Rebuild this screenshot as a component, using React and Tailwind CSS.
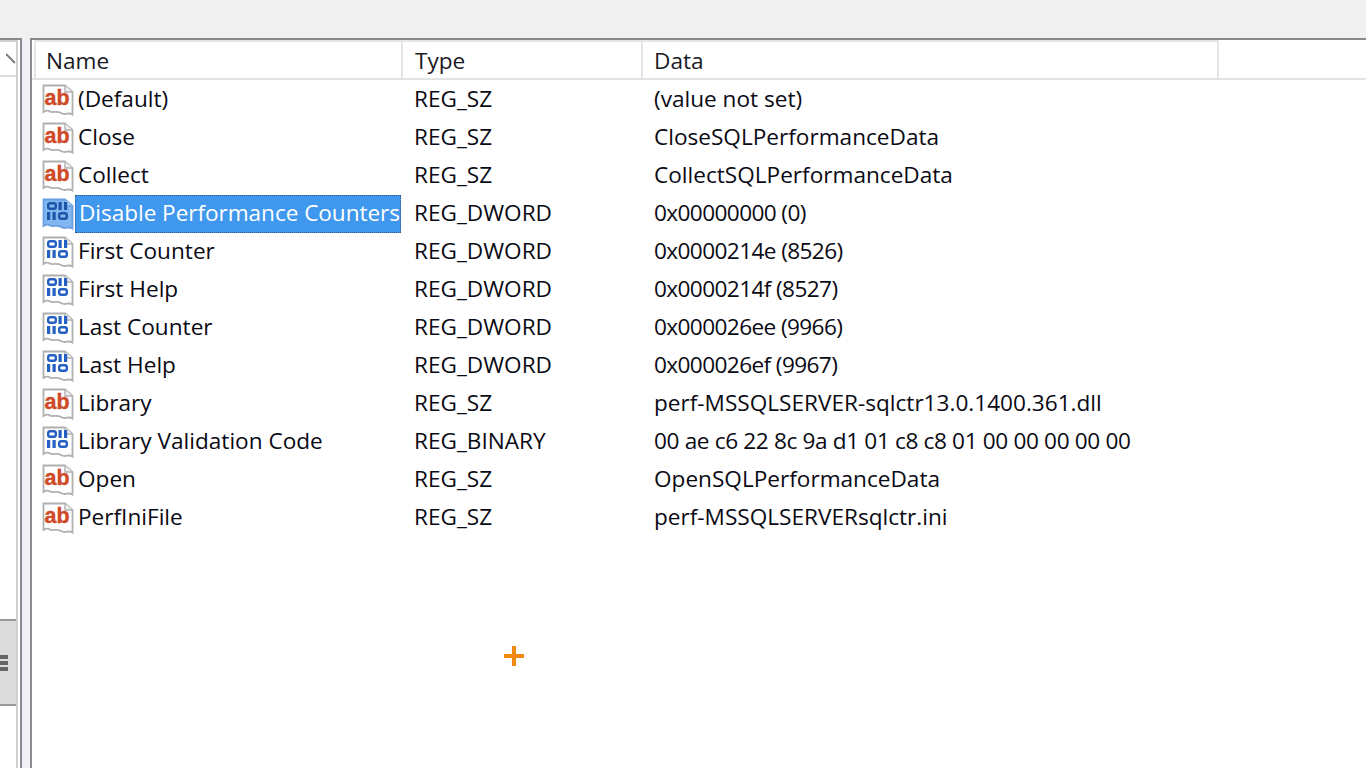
const rows = [
  { name: "(Default)", type: "REG_SZ", data: "(value not set)", icon: "ab" },
  { name: "Close", type: "REG_SZ", data: "CloseSQLPerformanceData", icon: "ab" },
  { name: "Collect", type: "REG_SZ", data: "CollectSQLPerformanceData", icon: "ab" },
  { name: "Disable Performance Counters", type: "REG_DWORD", data: "0x00000000 (0)", icon: "bin", selected: true, tight: "tracking-[-0.6px]" },
  { name: "First Counter", type: "REG_DWORD", data: "0x0000214e (8526)", icon: "bin", tight: "tracking-[-0.6px]" },
  { name: "First Help", type: "REG_DWORD", data: "0x0000214f (8527)", icon: "bin", tight: "tracking-[-0.6px]" },
  { name: "Last Counter", type: "REG_DWORD", data: "0x000026ee (9966)", icon: "bin", tight: "tracking-[-0.6px]" },
  { name: "Last Help", type: "REG_DWORD", data: "0x000026ef (9967)", icon: "bin", tight: "tracking-[-0.6px]" },
  { name: "Library", type: "REG_SZ", data: "perf-MSSQLSERVER-sqlctr13.0.1400.361.dll", icon: "ab" },
  { name: "Library Validation Code", type: "REG_BINARY", data: "00 ae c6 22 8c 9a d1 01 c8 c8 01 00 00 00 00 00", icon: "bin", tight: "tracking-[-0.35px]" },
  { name: "Open", type: "REG_SZ", data: "OpenSQLPerformanceData", icon: "ab" },
  { name: "PerfIniFile", type: "REG_SZ", data: "perf-MSSQLSERVERsqlctr.ini", icon: "ab" },
];

const Page = ({ children, selected }) => (
  <svg width="32" height="34" viewBox="0 0 32 34" className="shrink-0">
    <path
      d="M1.5 2.5 H23 L30.5 9 V31.5 C26 28.5 24 33 19 30 C14 27 11 30.5 8 28.5 C6 27 4 27.5 1.5 29 Z"
      fill={selected ? "#82b6f0" : "#fff"}
      stroke={selected ? "#6a9fe0" : "#b0b0b0"}
      strokeWidth="1.8"
    />
    <path d="M23 2.5 V9 H30.5" fill={selected ? "#a8cdf5" : "#eee"} stroke={selected ? "#6a9fe0" : "#b0b0b0"} strokeWidth="1.4" />
    {children}
  </svg>
);

const AbIcon = () => (
  <Page>
    <text
      x="2.5"
      y="22"
      textLength="25"
      lengthAdjust="spacingAndGlyphs"
      fontFamily="Liberation Sans, sans-serif"
      fontWeight="700"
      fontSize="22"
      fill="#cf4a28"
      stroke="#cf4a28"
      strokeWidth="0.4"
    >
      ab
    </text>
  </Page>
);

// the 011 / 110 blocks of the binary value icon
const BinIcon = ({ selected }) => {
  const blue = selected ? "#1c55a8" : "#2460c4";
  return (
    <Page selected={selected}>
      <rect x="6.2" y="6.2" width="7.6" height="5.6" rx="2" fill="none" stroke={blue} strokeWidth="2.4" />
      <rect x="16.5" y="5" width="3.2" height="8" fill={blue} />
      <rect x="22" y="5" width="3.2" height="8" fill={blue} />
      <rect x="5" y="15" width="3.2" height="8" fill={blue} />
      <rect x="10.5" y="15" width="3.2" height="8" fill={blue} />
      <rect x="17.2" y="16.2" width="7.6" height="5.6" rx="2" fill="none" stroke={blue} strokeWidth="2.4" />
    </Page>
  );
};

const Row = ({ row }) => {
  return (
    <div className="flex h-[38px] items-center text-[#0a0a14]">
      <div className="flex w-[369px] shrink-0 items-center pl-[10px]">
        {row.icon === "ab" ? <AbIcon /> : <BinIcon selected={row.selected} />}
        <span
          className={`ml-[1px] flex h-[38px] items-center whitespace-nowrap pb-[2px] pl-[3px] ${
            row.selected ? "w-[326px] border border-dotted border-[#33588a] bg-[#3f97ee] pl-[2px] tracking-[-0.05px] text-white" : ""
          }`}
        >
          {row.name}
        </span>
      </div>
      <div className="w-[240px] shrink-0 pb-[2px] pl-[13px]">{row.type}</div>
      <div className={`whitespace-nowrap pb-[2px] pl-[13px] ${row.tight || ""}`}>{row.data}</div>
    </div>
  );
};

export default function App() {
  return (
    <div
      className="relative flex h-[768px] w-[1366px] flex-col overflow-hidden bg-white text-[22.6px] leading-none"
      style={{ fontFamily: '"Open Sans", sans-serif' }}
    >
      <div className="h-[38px] shrink-0 bg-[#f0f0f0]" />
      <div className="flex min-h-0 flex-1 bg-[#f0f0f6]">
        {/* tree pane, cut off on the left */}
        <div className="flex w-[22px] shrink-0 border-r-2 border-t-2 border-[#8a8a8e] bg-white">
          <div className="flex w-[18px] shrink-0 flex-col border-r-2 border-t-2 border-[#cfcfcf] bg-white">
            <div className="flex h-[33px] items-center justify-end">
              <svg width="10" height="12" viewBox="0 0 10 12">
                <path d="M0 1 L9 10" stroke="#777" strokeWidth="1.8" fill="none" />
              </svg>
            </div>
            <div className="flex-1 border-t-2 border-[#dcdcdc]">
              <div className="mt-[542px] flex h-[87px] items-center border-y-2 border-[#9a9a9a] bg-[#dcdcdc]">
                <div className="flex w-[8px] flex-col gap-[2px]">
                  <div className="h-[4px] bg-[#666]" />
                  <div className="h-[4px] bg-[#666]" />
                  <div className="h-[4px] bg-[#666]" />
                </div>
              </div>
            </div>
          </div>
        </div>
        {/* splitter */}
        <div className="w-[8px] shrink-0" />
        {/* value list */}
        <div className="min-w-0 flex-1 border-l-2 border-t-2 border-[#8a8a8e] bg-white">
          <div className="flex h-[40px] border-b-2 border-[#e3e3e3] pl-[2px] text-[#1a1a24]">
            <div className="flex w-[369px] shrink-0 items-center border-x-2 border-t-2 border-[#e6e6e6] pl-[10px] pt-[2px]">Name</div>
            <div className="flex w-[240px] shrink-0 items-center border-r-2 border-t-2 border-[#e6e6e6] pl-[12px] pt-[2px]">Type</div>
            <div className="flex w-[576px] shrink-0 items-center border-r-2 border-t-2 border-[#e6e6e6] pl-[11px] pt-[2px]">Data</div>
          </div>
          <div className="pt-[1px]">
            {rows.map((row) => (
              <Row key={row.name} row={row} />
            ))}
          </div>
        </div>
      </div>
      {/* cursor marker */}
      <svg width="20" height="20" viewBox="0 0 20 20" className="absolute left-[504px] top-[646px]">
        <path d="M0 10 H20 M10 0 V20" stroke="#f08a10" strokeWidth="4" />
      </svg>
    </div>
  );
}
